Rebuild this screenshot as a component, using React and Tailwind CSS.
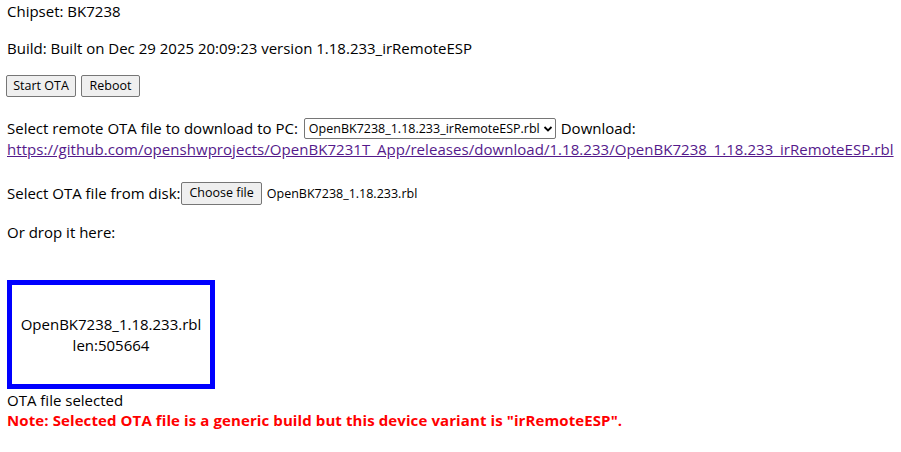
import React from "react";

const font = { fontFamily: "'Open Sans', 'Noto Sans', sans-serif" };

const NativeButton = ({ children, className = "" }) => (
  <button
    className={`h-[22px] px-[6px] bg-[#efefef] border border-[#767676] rounded-[2px] text-[12.5px] text-black leading-none ${className}`}
  >
    {children}
  </button>
);

export default function App() {
  return (
    <div className="bg-white text-black text-[15px] leading-[21px] px-[7px] pt-[1px] h-[452px]" style={font}>
      <p>Chipset: BK7238</p>
      <p className="mt-[16px]">Build: Built on Dec 29 2025 20:09:23 version 1.18.233_irRemoteESP</p>

      <div className="mt-[16px] flex gap-[5px] -ml-[1px]">
        <NativeButton className="w-[70px]">Start OTA</NativeButton>
        <NativeButton className="w-[59px]">Reboot</NativeButton>
      </div>

      <div className="mt-[21px]">
        <div className="flex items-center">
          <span>Select remote OTA file to download to PC:</span>
          <div className="ml-[6px] h-[21px] flex items-center border border-[#767676] rounded-[2px] pl-[4px] pr-[2px] text-[12.5px]">
            <span>OpenBK7238_1.18.233_irRemoteESP.rbl</span>
            <svg width="10" height="10" viewBox="0 0 10 10" className="ml-[3px]">
              <path d="M1.5 3 L5 6.5 L8.5 3" fill="none" stroke="black" strokeWidth="1.8" />
            </svg>
          </div>
          <span className="ml-[5px]">Download:</span>
        </div>
        <a href="#" className="text-[#551a8b] underline block tracking-[0.05px]">
          https://github.com/openshwprojects/OpenBK7231T_App/releases/download/1.18.233/OpenBK7238_1.18.233_irRemoteESP.rbl
        </a>
      </div>

      <div className="mt-[22px] flex items-center">
        <span>Select OTA file from disk:</span>
        <NativeButton className="h-[23px] ml-[1px] px-[7px]">Choose file</NativeButton>
        <span className="ml-[5px] text-[12.5px]">OpenBK7238_1.18.233.rbl</span>
      </div>

      <p className="mt-[17px]">Or drop it here:</p>

      <div className="mt-[37px] w-[208px] h-[109px] border-[5px] border-[#0000ff] flex flex-col items-center justify-center">
        <span>OpenBK7238_1.18.233.rbl</span>
        <span>len:505664</span>
      </div>

      <p className="leading-[20px] mt-[1px]">OTA file selected</p>
      <p className="text-[#ff0000] font-bold leading-[20px] tracking-[0.1px]">
        Note: Selected OTA file is a generic build but this device variant is "irRemoteESP".
      </p>
    </div>
  );
}
